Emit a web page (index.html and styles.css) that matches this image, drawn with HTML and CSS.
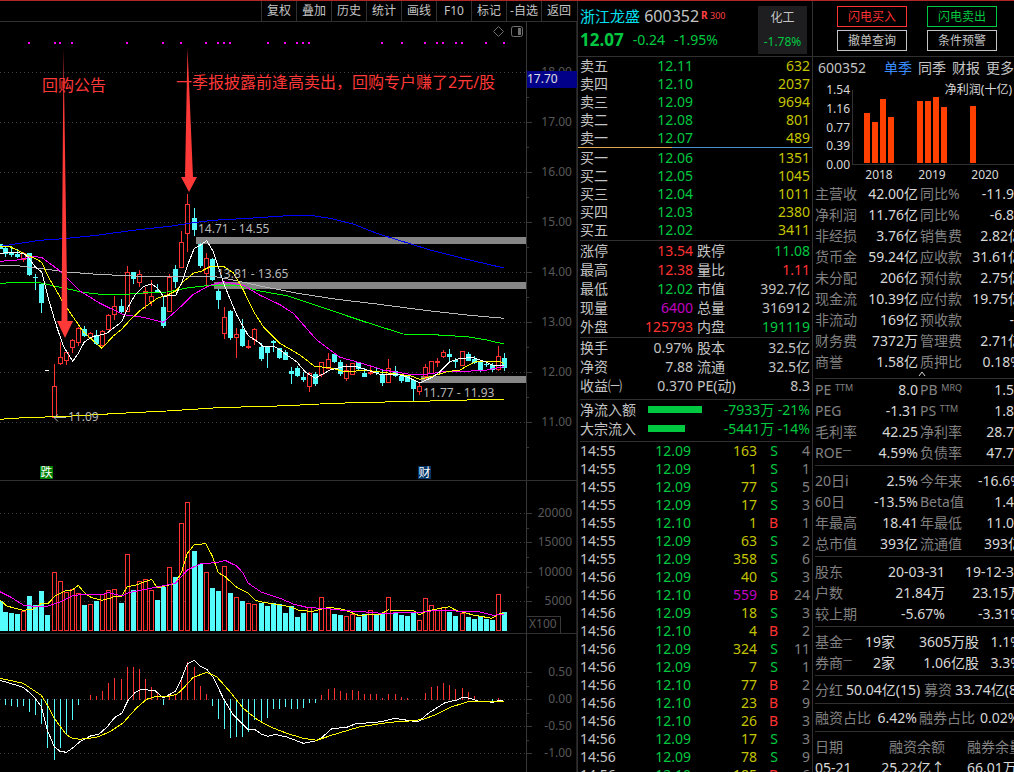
FILE: index.html
```html
<!DOCTYPE html>
<html lang="zh-CN">
<head>
<meta charset="utf-8">
<title>浙江龙盛 600352</title>
<link rel="stylesheet" href="styles.css">
</head>
<body>
<main class="app">
  <section class="charts">
    <nav class="toolbar">
      <button>复权</button><button>叠加</button><button>历史</button><button>统计</button><button>画线</button><button>F10</button><button>标记</button><button>-自选</button><button>返回</button>
    </nav>
    <svg class="plot" id="price" viewBox="0 22 577 458"></svg>
    <svg class="plot" id="volume" viewBox="0 480 577 153"></svg>
    <svg class="plot" id="macd" viewBox="0 633 577 139"></svg>
  </section>

  <section class="quote">
    <header class="quote-head">
      <div>
        <h1 class="title"><span class="name">浙江龙盛</span> <span class="code">600352</span><span class="flag"><b>R</b> 300</span></h1>
        <p class="now"><b>12.07</b><span>-0.24</span><span>-1.95%</span></p>
      </div>
      <div class="sector"><span>化工</span><span class="g">-1.78%</span></div>
    </header>
    <table class="book">
      <tr><th>卖五</th><td class="g">12.11</td><td class="y">632</td></tr>
      <tr><th>卖四</th><td class="g">12.10</td><td class="y">2037</td></tr>
      <tr><th>卖三</th><td class="g">12.09</td><td class="y">9694</td></tr>
      <tr><th>卖二</th><td class="g">12.08</td><td class="y">801</td></tr>
      <tr><th>卖一</th><td class="g">12.07</td><td class="y">489</td></tr>
    </table>
    <div class="ratio"></div>
    <table class="book bids">
      <tr><th>买一</th><td class="g">12.06</td><td class="y">1351</td></tr>
      <tr><th>买二</th><td class="g">12.05</td><td class="y">1045</td></tr>
      <tr><th>买三</th><td class="g">12.04</td><td class="y">1011</td></tr>
      <tr><th>买四</th><td class="g">12.03</td><td class="y">2380</td></tr>
      <tr><th>买五</th><td class="g">12.02</td><td class="y">3411</td></tr>
    </table>
    <table class="stats">
      <tr><th>涨停</th><td class="r">13.54</td><th>跌停</th><td class="g">11.08</td></tr>
      <tr><th>最高</th><td class="r">12.38</td><th>量比</th><td class="r">1.11</td></tr>
      <tr><th>最低</th><td class="g">12.02</td><th>市值</th><td>392.7亿</td></tr>
      <tr><th>现量</th><td class="m">6400</td><th>总量</th><td>316912</td></tr>
      <tr><th>外盘</th><td class="r">125793</td><th>内盘</th><td class="g">191119</td></tr>
    </table>
    <table class="stats ratios">
      <tr><th>换手</th><td>0.97%</td><th>股本</th><td>32.5亿</td></tr>
      <tr><th>净资</th><td>7.88</td><th>流通</th><td>32.5亿</td></tr>
      <tr><th>收益㈠</th><td>0.370</td><th>PE(动)</th><td>8.3</td></tr>
    </table>
    <div class="flows">
      <div class="flow"><span class="flow-label">净流入额</span><i class="bar bar-net"></i><span class="g">-7933万 -21%</span></div>
      <div class="flow"><span class="flow-label">大宗流入</span><i class="bar bar-block"></i><span class="g">-5441万 -14%</span></div>
    </div>
    <table class="ticks">
      <tr><th>14:55</th><td class="g">12.09</td><td class="y">163</td><td class="g">S</td><td class="n">4</td></tr>
      <tr><th>14:55</th><td class="g">12.09</td><td class="y">1</td><td class="g">S</td><td class="n">1</td></tr>
      <tr><th>14:55</th><td class="g">12.09</td><td class="y">77</td><td class="g">S</td><td class="n">5</td></tr>
      <tr><th>14:55</th><td class="g">12.09</td><td class="y">17</td><td class="g">S</td><td class="n">3</td></tr>
      <tr><th>14:55</th><td class="g">12.10</td><td class="y">1</td><td class="r">B</td><td class="n">1</td></tr>
      <tr><th>14:55</th><td class="g">12.09</td><td class="y">63</td><td class="g">S</td><td class="n">2</td></tr>
      <tr><th>14:55</th><td class="g">12.09</td><td class="y">358</td><td class="g">S</td><td class="n">6</td></tr>
      <tr><th>14:56</th><td class="g">12.09</td><td class="y">40</td><td class="g">S</td><td class="n">3</td></tr>
      <tr><th>14:56</th><td class="g">12.10</td><td class="m">559</td><td class="r">B</td><td class="n">24</td></tr>
      <tr><th>14:56</th><td class="g">12.09</td><td class="y">18</td><td class="g">S</td><td class="n">3</td></tr>
      <tr><th>14:56</th><td class="g">12.10</td><td class="y">4</td><td class="r">B</td><td class="n">2</td></tr>
      <tr><th>14:56</th><td class="g">12.09</td><td class="y">324</td><td class="g">S</td><td class="n">11</td></tr>
      <tr><th>14:56</th><td class="g">12.09</td><td class="y">7</td><td class="g">S</td><td class="n">1</td></tr>
      <tr><th>14:56</th><td class="g">12.10</td><td class="y">77</td><td class="r">B</td><td class="n">2</td></tr>
      <tr><th>14:56</th><td class="g">12.10</td><td class="y">23</td><td class="r">B</td><td class="n">9</td></tr>
      <tr><th>14:56</th><td class="g">12.10</td><td class="y">26</td><td class="r">B</td><td class="n">3</td></tr>
      <tr><th>14:56</th><td class="g">12.09</td><td class="y">17</td><td class="g">S</td><td class="n">3</td></tr>
      <tr><th>14:56</th><td class="g">12.09</td><td class="y">78</td><td class="g">S</td><td class="n">9</td></tr>
      <tr><th>14:56</th><td class="g">12.10</td><td class="y">185</td><td class="r">B</td><td class="n">6</td></tr>
    </table>
  </section>

  <section class="finance">
    <div class="actions">
      <button class="buy">闪电买入</button><button class="sell">闪电卖出</button>
      <button>撤单查询</button><button>条件预警</button>
    </div>
    <nav class="tabs"><span>600352</span><a href="#" class="on">单季</a><a href="#">同季</a><a href="#">财报</a><a href="#">更多</a></nav>
    <svg class="profit" id="profit" viewBox="812 80 202 103"></svg>
    <div class="sheet">
      <table class="fin main-fin">
        <tr><th>主营收</th><td>42.00亿</td><th>同比%</th><td class="cut">-11.9</td></tr>
        <tr><th>净利润</th><td>11.76亿</td><th>同比%</th><td class="cut">-6.8</td></tr>
        <tr><th>非经损</th><td>3.76亿</td><th>销售费</th><td>2.82亿</td></tr>
        <tr><th>货币金</th><td>59.24亿</td><th>应收款</th><td>31.61亿</td></tr>
        <tr><th>未分配</th><td>206亿</td><th>预付款</th><td>2.75亿</td></tr>
        <tr><th>现金流</th><td>10.39亿</td><th>应付款</th><td>19.75亿</td></tr>
        <tr><th>非流动</th><td>169亿</td><th>预收款</th><td class="cut">-</td></tr>
        <tr><th>财务费</th><td>7372万</td><th>管理费</th><td>2.71亿</td></tr>
        <tr><th>商誉</th><td>1.58亿</td><th>质押比</th><td>0.18%</td></tr>
      </table>
      <button class="fold" aria-label="收起"><svg viewBox="0 0 8 6"><path d="M1 5 4 1 7 5"/></svg></button>
      <table class="fin tight">
        <tr><th>PE <sup>TTM</sup></th><td>8.0</td><th>PB <sup>MRQ</sup></th><td class="cut">1.5</td></tr>
        <tr><th>PEG</th><td>-1.31</td><th>PS <sup>TTM</sup></th><td class="cut">1.8</td></tr>
        <tr><th>毛利率</th><td>42.25</td><th>净利率</th><td class="cut">28.7</td></tr>
        <tr><th>ROE<sup>一</sup></th><td>4.59%</td><th>负债率</th><td class="cut">47.7</td></tr>
      </table>
      <table class="fin">
        <tr><th>20日i</th><td>2.5%</td><th>今年来</th><td>-16.6%</td></tr>
        <tr><th>60日</th><td>-13.5%</td><th>Beta值</th><td class="cut">1.4</td></tr>
        <tr><th>年最高</th><td>18.41</td><th>年最低</th><td class="cut">11.0</td></tr>
        <tr><th>总市值</th><td>393亿</td><th>流通值</th><td>393亿</td></tr>
      </table>
      <table class="fin holders">
        <tr><th>股东</th><td>20-03-31</td><td>19-12-31</td></tr>
        <tr><th>户数</th><td>21.84万</td><td>23.15万</td></tr>
        <tr><th>较上期</th><td>-5.67%</td><td>-3.31%</td></tr>
      </table>
      <table class="fin funds">
        <tr><th>基金<sup>一</sup></th><td>19家</td><td>3605万股</td><td class="cut">1.1%</td></tr>
        <tr><th>券商<sup>一</sup></th><td>2家</td><td>1.06亿股</td><td class="cut">3.3%</td></tr>
      </table>
      <p class="line"><span>分红</span><b>50.04亿(15)</b><span>募资</span><b>33.74亿(8)</b></p>
      <p class="line wide"><span>融资占比</span><b>6.42%</b><span>融券占比</span><b>0.02%</b></p>
      <table class="fin margin">
        <tr><th>日期</th><th>融资余额</th><th>融券余量</th></tr>
        <tr><td>05-21</td><td>25.22亿↑</td><td>66.01万</td></tr>
      </table>
    </div>
  </section>
</main>
<script src="chart.js"></script>
</body>
</html>
```
FILE: styles.css
```css
* { box-sizing: border-box; }
body {
  margin: 0;
  background: #000;
  color: #c4c4c4;
  font: 14px/18px "Noto Sans", "Noto Sans CJK SC", sans-serif;
}
h1, p { margin: 0; font-weight: 400; }
button { margin: 0; padding: 0; background: none; color: inherit; font: inherit; border: 0; }
table { width: 100%; border-collapse: collapse; table-layout: fixed; }
th, td { padding: 0; font-weight: 400; text-align: right; white-space: nowrap; }
th { text-align: left; }

.g { color: #00c840; }
.r { color: #ff3232; }
.y { color: #c4c400; }
.m { color: #c000c0; }
.n { color: #808080; }

.app {
  display: grid;
  grid-template-columns: minmax(0, 1fr) 235px 202px;
  height: 100vh;
  overflow: hidden;
  border-top: 1px solid #b02828;
}

/* chart column */
.charts { min-width: 0; }
.toolbar {
  display: flex;
  justify-content: flex-end;
  height: 21px;
  padding-right: 1px;
  border-bottom: 1px solid #303030;
}
.toolbar button {
  width: 35px;
  border-left: 1px solid #303030;
  font-size: 12px;
  line-height: 20px;
  white-space: nowrap;
}
.plot { display: block; width: 100%; height: auto; }
svg text { font-family: "Noto Sans", "Noto Sans CJK SC", sans-serif; font-size: 12px; }
svg .note { font-size: 16px; fill: #ff3838; }

/* quote column */
.quote { min-width: 0; border-left: 1px solid #303030; padding: 0 2px; }
.quote-head {
  display: flex;
  justify-content: space-between;
  height: 56px;
  margin: 0 -2px;
  padding: 4px 5px 2px 2px;
  border-bottom: 1px solid #303030;
}
.title { font-size: 16px; line-height: 20px; white-space: nowrap; }
.name { color: #00e0f0; font-size: 15px; }
.flag { margin-left: 2px; color: #ff4040; font-size: 9px; vertical-align: 3px; }
.flag b { font-size: 10px; }
.now { display: flex; gap: 9px; color: #00c840; line-height: 28px; }
.now b { font-size: 17px; }
.sector {
  display: flex;
  flex-direction: column;
  width: 49px;
  margin-top: 1px;
  background: #1e1e20;
  font-size: 12px;
  line-height: 24px;
  text-align: center;
}
.book td, .book th, .ticks td, .ticks th { height: 18px; line-height: 18px; }
.book th { width: 40px; }
.book td:nth-child(2) { width: 73px; }
.ratio { height: 1px; margin: 0 -2px 1px; background: linear-gradient(to right, #e0a850 40%, #4890d0 40%); }
.bids { margin-bottom: 1px; }
.stats, .flows, .ticks { border-top: 1px solid #303030; }
.stats td, .stats th { height: 19px; line-height: 19px; }
.stats th { width: 45px; }
.stats td:nth-child(2) { width: 68px; }
.stats th:nth-child(3) { padding-left: 4px; }
.stats { margin-bottom: 1px; }
.stats.ratios { margin-bottom: 4px; }
.flows { padding-bottom: 3px; }
.flow { display: flex; align-items: center; height: 19px; white-space: nowrap; }
.flow .g { margin-left: auto; }
.flow-label { width: 68px; }
.bar { height: 7px; background: #00c840; }
.bar-net { width: 54px; }
.bar-block { width: 37px; }
.ticks th { width: 45px; }
.ticks td:nth-child(2) { width: 66px; }
.ticks td:nth-child(3) { width: 66px; }
.ticks td:nth-child(4) { width: 21px; }

/* finance column */
.finance { min-width: 0; overflow: hidden; border-left: 1px solid #303030; }
.actions {
  display: grid;
  grid-template-columns: 70px 70px;
  gap: 3px 20px;
  height: 56px;
  padding: 5px 0 0 24px;
  grid-auto-rows: 21px;
  border-bottom: 1px solid #303030;
}
.actions button { border: 1px solid #c4c4c4; font-size: 12px; line-height: 18px; }
.actions .buy { border-color: #ff3232; color: #ff3232; }
.actions .sell { border-color: #00c840; color: #00c840; }
.tabs { display: flex; gap: 6px; height: 23px; padding-left: 5px; line-height: 22px; white-space: nowrap; }
.tabs span { width: 60px; }
.tabs a { color: inherit; text-decoration: none; }
.tabs .on { color: #3a8cff; }
.profit { display: block; width: 202px; margin-left: -1px; }

.sheet { position: relative; width: 209px; padding-left: 2px; color: #d8d8d8; }
.fin {
  border-collapse: separate;
  border-spacing: 0;
  border-top: 1px solid #303030;
  padding: 4px 0 2px;
}
.fin td, .fin th { height: 21px; line-height: 21px; }
.fin th { color: #808080; width: 44px; }
.fin td:nth-child(2) { width: 59px; }
.fin th:nth-child(3) { width: 46px; padding-left: 2px; }
.fin .cut { padding-right: 8px; }
.main-fin { border-top: 0; padding: 0 0 6px; }
.tight { padding-top: 0; }
.fin sup { font-size: 9px; line-height: 0; vertical-align: 4px; }
.holders td:nth-child(2) { width: 86px; }
.funds td:nth-child(2) { width: 36px; }
.funds td:nth-child(3) { width: 84px; }
.fin.funds .cut { padding-right: 0; }
.fold { position: absolute; left: 105px; top: 188px; width: 8px; height: 6px; line-height: 0; }
.fold svg { width: 8px; height: 6px; fill: none; stroke: #d8d8d8; }
.line { display: flex; height: 28px; padding-top: 3px; border-top: 1px solid #303030; line-height: 22px; white-space: nowrap; }
.line span { flex: none; width: 31px; color: #808080; }
.line b { flex: none; width: 78px; font-weight: 400; }
.wide span { width: 59px; }
.wide b { width: 43px; text-align: right; }
.wide b + span { width: 63px; padding-left: 2px; }
.wide b:last-child { text-align: left; }
.margin th:nth-child(2), .margin td:nth-child(2) { width: 86px; text-align: right; }
.margin td:first-child { text-align: left; }
.margin th:nth-child(3), .margin td:nth-child(3) { padding-left: 22px; text-align: left; width: 77px; }
```
FILE: chart.js
```javascript
const RED = '#ff3232', CYAN = '#54fcfc', GRID = '#404040', DIM = '#585858';
const rect = (x, y, w, h, fill, extra = '') =>
  `<rect x="${x}" y="${y}" width="${w}" height="${h}" fill="${fill}" shape-rendering="crispEdges" ${extra}/>`;
const box = (x, y, w, h, stroke) => rect(x + .5, y + .5, w - 1, Math.max(h - 1, 1), '#000', `stroke="${stroke}"`);
const text = (x, y, s, fill, extra = '') => `<text x="${x}" y="${y}" fill="${fill}" ${extra}>${s}</text>`;
const dots = y => `<path d="M0 ${y}.5H526" stroke="${GRID}" stroke-dasharray="1 3" shape-rendering="crispEdges"/>`;

// Series are stored at three units per pixel, measured from a panel origin.
const line = (pts, color, oy) => {
  const p = pts.trim().split(/\s+/).map(s => s.split(',')).map(([x, y]) => `${(x / 3).toFixed(1)},${(oy + y / 3).toFixed(1)}`);
  return `<polyline points="${p.join(' ')}" fill="none" stroke="${color}" stroke-width="1" shape-rendering="crispEdges"/>`;
};
const frame = (top, bottom, labels, minor) =>
  rect(526, top, 1, bottom - top, '#383838') + rect(576, top, 1, bottom - top, '#202020') +
  labels.map(([y, s]) => dots(y) + rect(527, y, 5, 1, '#383838') + text(572, y + 4, s, DIM, 'text-anchor="end"')).join('') +
  minor.map(y => rect(527, y, 2, 1, '#383838')).join('');

// x, kind, high, low, body top, body bottom
const candles = `2 c 192 206 192 206|16 c 200 230 204 221|34 c 197 231 219 225|52 c 206 234 222 231|70 r 215 245 220 236|88 c 219 288 219 285
|106 c 282 330 291 294|124 c 308 399 311 369|163 r 552 714 619 712|181 r 486 554 532 548|199 r 510 555 516 539|217 r 478 520 481 500
|235 r 440 497 443 485|253 c 438 471 447 468|271 r 455 475 458 470|289 c 450 495 465 492|307 r 450 500 452 496|325 r 402 448 404 446
|343 r 348 420 379 403|364 c 357 400 378 396|382 r 258 396 276 394|400 c 276 312 276 297|418 r 270 320 283 305|436 r 320 386 333 338
|454 r 300 378 349 364|472 c 312 340 330 336|490 c 350 444 381 438|508 r 282 393 290 392|526 c 254 324 267 306|544 r 153 262 187 260
|562 r 42 215 72 160|583 c 84 168 113 150|601 c 190 264 192 258|619 r 219 323 235 278|637 c 233 303 237 300|655 c 327 387 332 360
|673 r 381 476 412 458|691 c 390 480 393 474|709 r 444 534 462 470|727 c 417 500 447 498|745 r 480 508 499 502|763 r 444 494 448 478
|784 c 489 543 501 537|802 c 500 564 500 519|820 c 480 515 483 489|838 c 504 538 504 534|856 c 510 540 516 540|874 c 561 612 573 581
|892 c 558 590 564 588|910 c 576 606 591 600|928 r 577 636 580 617|946 c 575 617 583 612|964 r 545 590 547 583|985 r 519 567 538 564
|1003 c 522 550 522 546|1021 c 540 587 546 582|1039 r 552 603 571 593|1057 r 549 585 550 583|1075 c 546 570 547 567|1093 c 565 591 579 591
|1111 r 555 585 575 580|1129 c 565 585 573 579|1147 c 570 618 584 609|1165 r 537 609 564 607|1186 c 558 590 573 588|1204 c 582 609 588 603
|1222 c 584 606 586 606|1240 c 600 663 600 627|1258 r 610 644 619 632|1276 r 552 600 562 588|1294 r 543 580 544 580|1312 r 534 560 542 547
|1330 r 510 534 517 527|1348 c 507 543 521 531|1366 c 534 564 540 546|1387 r 513 556 514 554|1405 c 516 543 521 543|1423 c 528 552 537 548
|1441 c 545 576 547 573|1459 c 545 560 551 555|1477 c 548 576 555 570|1495 r 498 573 529 567|1513 c 519 573 534 564`
  .split('|').map(s => s.trim().split(' '));

let h = frame(22, 480, [18, 17, 16, 15, 14, 13, 12, 11].map((v, i) => [72 + 50 * i, v + '.00']), [97, 147, 197, 247, 297, 347, 397, 447]);
h += rect(196, 237, 330, 7, '#868686') + rect(214, 282, 312, 7, '#868686') + rect(421, 376, 105, 7, '#868686');
for (const [x, k, hi, lo, t, b] of candles) {
  const X = Math.floor(x / 3), Y = v => Math.round(180 + v / 3);
  const c = k === 'r' ? RED : CYAN;
  h += rect(X, Y(hi), 1, Math.max(Y(lo) - Y(hi), 1), c);
  const bh = Math.max(Y(b) - Y(t) + (k === 'r' ? 1 : 0), 1);
  h += k === 'r' ? box(X - 2, Y(t), 5, bh, c) : rect(X - 2, Y(t), 5, bh, c);
}
h += rect(45, 370, 4, 1, '#fff');
h += line('0,199 60,190 120,181 190,176 290,166 400,151 510,139 580,128 640,121 760,114 880,106 930,106 990,115 1060,132 1130,160 1220,188 1290,210 1400,238 1512,264', '#0000ff', 180);
h += line('0,256 60,258 140,268 200,276 290,283 400,288 530,290 650,291 700,300 780,318 900,341 1010,358 1130,372 1260,389 1400,405 1512,415', '#b8b8b8', 180);
h += line('0,310 60,307 120,308 180,322 250,337 310,344 380,343 440,338 500,336 560,324 620,317 660,315 720,318 780,333 860,347 960,380 1090,424 1210,462 1300,464 1400,470 1460,480 1512,492', '#00ff00', 180);
h += line('0,244 50,240 100,230 125,232 180,273 240,333 300,370 370,404 430,412 490,427 540,382 580,343 630,316 670,305 730,316 780,346 840,374 880,400 950,480 1020,532 1080,548 1150,570 1230,583 1270,584 1330,575 1400,574 1460,570 1512,560', '#ff00ff', 180);
h += line('0,198 30,200 70,220 110,238 125,247 145,290 185,360 215,405 250,455 280,482 306,505 340,468 365,448 390,420 420,392 450,370 475,353 500,346 527,333 550,305 580,280 605,273 630,260 670,259 700,278 730,330 760,393 790,440 805,455 840,490 900,525 945,560 985,562 1035,575 1100,571 1170,580 1230,587 1260,598 1300,588 1340,575 1380,570 1410,553 1430,544 1500,545 1512,550', '#ffff00', 180);
h += line('0,220 40,217 70,220 85,232 105,260 125,276 145,355 170,440 190,498 218,544 235,520 253,486 275,471 320,460 365,425 385,380 405,345 430,320 455,311 475,327 490,349 527,346 545,308 565,250 583,205 600,196 620,182 640,215 655,262 675,320 710,405 745,467 780,490 790,500 820,498 840,510 865,528 890,545 915,575 946,595 990,570 1030,560 1070,560 1100,570 1145,585 1190,583 1220,590 1260,609 1300,590 1320,575 1350,545 1380,535 1420,533 1460,547 1480,557 1512,558', '#ffffff', 180);
h += line('0,718 70,713 200,709 360,700 500,693 640,684 750,680 810,679 900,675 1000,670 1120,667 1240,664 1340,662 1430,659 1512,658', '#ffff00', 180);
h += text(198, 233, '14.71 - 14.55', '#b8b8b8') + text(217, 278, '13.81 - 13.65', '#b8b8b8') + text(423, 397, '11.77 - 11.93', '#b8b8b8') + text(68, 421, '11.09', '#b8b8b8');
h += '<path d="M66 417.5H54M58 414.5l-4 3 4 4" fill="none" stroke="#b8b8b8"/>';
h += [78, 146, 162, 194, 343, 440, 489, 556, 589, 605, 621, 722, 770, 802, 818, 835, 1032, 1084, 1148, 1181, 1197, 1230, 1248, 1313, 1362]
  .map(x => rect(Math.floor(x / 2.703), 42, 2, 2, '#ff00ff')).join('');
h += '<path d="M63.5 48 67.5 321H73L65 338 57 321H61.5ZM187.5 48 193 177H197L189 192 181 177H185Z" fill="#ff3838"/>';
h += text(42, 91, '回购公告', '', 'class="note"') + text(176, 88, '一季报披露前逢高卖出，回购专户赚了2元/股', '', 'class="note"');
h += '<path d="M498.5 26.5l5 5-5 5-5-5z" fill="none" stroke="#707070"/><rect x="511.5" y="26.500" width="11" height="10" rx="2" fill="none" stroke="#707070"/><path d="M518 28h3v7h-3z" fill="#707070"/>';
h += rect(527, 71, 50, 17, '#000088') + text(527, 83, '17.70', '#e0e0e0');
h += rect(40, 466, 13, 13, '#008000') + text(40.5, 477, '跌', '#fff') + rect(418, 466, 13, 13, '#003366') + text(418.5, 477, '财', '#fff');
document.getElementById('price').innerHTML = h;

// volume
const vols = `2 c 483,16 c 516,34 c 519,52 c 522,70 r 512,88 c 468,106 c 495,124 c 453,142 c 525,163 r 397,181 r 424,199 r 457,217 r 448,235 r 460,253 c 495,271 r 493,289 c 483,307 r 463,325 r 451,343 r 448,364 c 489,382 r 343,400 c 450,418 r 424,436 r 418,454 r 451,472 c 480,490 c 440,508 r 382,526 c 411,544 r 250,562 r 187,583 c 333,601 c 373,619 r 397,637 c 444,655 c 453,673 r 379,691 c 459,709 r 472,727 c 483,745 r 490,763 r 493,784 c 489,802 c 498,820 c 489,838 c 492,856 c 519,874 c 498,892 c 531,910 c 519,928 r 502,946 c 519,964 r 472,985 r 502,1003 c 522,1021 c 525,1039 r 529,1057 r 523,1075 c 531,1093 c 522,1111 r 511,1129 c 525,1147 c 519,1165 r 472,1186 c 517,1204 c 525,1222 c 528,1240 c 519,1258 r 541,1276 r 475,1294 r 496,1312 r 510,1330 r 502,1348 c 516,1366 c 528,1387 r 520,1405 c 531,1423 c 537,1441 c 528,1459 c 537,1477 c 540,1495 r 463,1513 c 516`.split(',').map(s => s.split(' '));
let v = rect(0, 480, 577, 1, '#303030') + frame(481, 633, [[513, '20000'], [542, '15000'], [572, '10000'], [601, '5000']], [528, 557, 587]);
for (const [x, k, t] of vols) {
  const X = Math.floor(x / 3) - 2, y = Math.round(440 + t / 3);
  v += k === 'r' ? box(X, y, 5, 631 - y, RED) : rect(X, y, 5, 631 - y, CYAN);
}
v += line('0,480 20,498 70,511 100,507 125,490 145,490 165,468 195,453 217,450 235,436 255,460 275,473 306,481 330,475 345,468 365,468 382,440 405,436 455,418 472,444 526,430 545,395 562,340 583,314 617,311 637,348 655,398 675,410 710,442 745,459 765,481 790,487 840,495 870,500 900,512 940,514 985,502 1030,508 1075,526 1140,523 1165,510 1240,511 1258,525 1280,513 1348,500 1370,512 1420,525 1475,535 1500,520 1512,522', '#ffff00', 440);
v += line('0,455 30,470 70,495 110,500 145,498 180,486 217,468 245,463 300,465 325,458 365,468 385,458 455,444 526,430 562,390 600,372 655,367 675,361 710,378 730,400 745,430 785,457 840,475 880,492 920,502 990,507 1040,512 1130,518 1150,522 1190,518 1260,517 1320,510 1400,515 1440,516 1480,526 1512,522', '#ff00ff', 440);
v += '<path d="M527 616.500H560.500V633" fill="none" stroke="#383838"/>' + text(529, 628, 'X100', DIM);
document.getElementById('volume').innerHTML = v;

// MACD
const hist = [16,795,34,798,52,801,70,798,88,816,106,825,124,852,142,924,163,960,181,924,199,885,217,840,235,795,271,765,289,768,307,753,325,729,343,714,364,717,382,681,400,681,418,687,436,717,454,741,472,756,490,795,508,765,526,762,544,717,562,666,583,681,601,738,619,762,637,798,655,837,673,867,691,894,709,891,727,891,745,876,763,840,784,846,802,834,820,807,838,807,856,801,874,807,892,807,910,804,928,789,946,789,964,765,985,747,1003,744,1021,753,1039,759,1057,750,1075,753,1093,762,1111,762,1129,762,1147,774,1165,762,1186,762,1204,771,1222,774,1276,759,1294,741,1312,738,1330,729,1348,735,1366,747,1387,744,1405,756,1423,768,1477,784,1495,774];
let m = rect(0, 633, 577, 1, '#303030') + frame(634, 772, [[672, '0.50'], [699, '0.00'], [726, '-0.50'], [753, '-1.00']], [686, 713, 740]);
for (let i = 0; i < hist.length; i += 2) {
  const X = Math.floor(hist[i] / 3), y = Math.round(440 + hist[i + 1] / 3);
  m += y < 699 ? rect(X, y, 1, 700 - y, RED) : rect(X, 699, 1, y - 699, CYAN);
}
m += line('0,721 70,742 100,768 124,800 142,870 163,920 180,934 199,937 217,925 240,905 275,886 295,884 320,862 345,832 365,820 385,780 405,758 425,748 465,752 490,773 510,763 527,753 545,715 562,672 583,661 600,678 620,688 640,712 670,775 700,825 745,870 765,869 785,883 805,889 825,883 860,891 910,910 945,903 965,893 995,866 1040,862 1065,852 1145,845 1185,835 1235,843 1258,843 1285,820 1335,788 1370,780 1387,772 1410,775 1435,783 1480,787 1500,780 1512,784', '#ffffff', 440);
m += line('0,715 70,730 124,766 145,800 163,835 199,884 217,895 240,898 290,892 330,875 370,848 410,803 440,778 470,768 500,771 530,763 545,750 580,712 620,697 650,710 690,755 730,805 770,838 810,860 860,880 910,895 950,901 1000,884 1080,860 1170,847 1240,842 1270,838 1310,823 1350,802 1405,785 1512,785', '#ffff00', 440);
document.getElementById('macd').innerHTML = m;

// quarterly profit
let p = rect(852, 90, 1, 75, '#303030') + rect(852, 164, 162, 1, '#303030');
p += [['1.54', 90], ['1.16', 109], ['0.77', 128], ['0.39', 146], ['0.00', 165]].map(([s, y]) => text(850, y + 4, s, '#d8d8d8', 'text-anchor="end"')).join('');
p += [[864, 113], [872, 122], [880, 99], [888, 117], [917, 101], [925, 101], [933, 97], [941, 107], [970, 106]].map(([x, y]) => rect(x, y, 6, 163 - y, '#ff4000')).join('');
p += [['2018', 879], ['2019', 932], ['2020', 985]].map(([s, x]) => text(x, 179, s, '#d8d8d8', 'text-anchor="middle"')).join('');
p += text(1012, 94, '净利润(十亿)', '#d8d8d8', 'text-anchor="end"');
document.getElementById('profit').innerHTML = p;
```
